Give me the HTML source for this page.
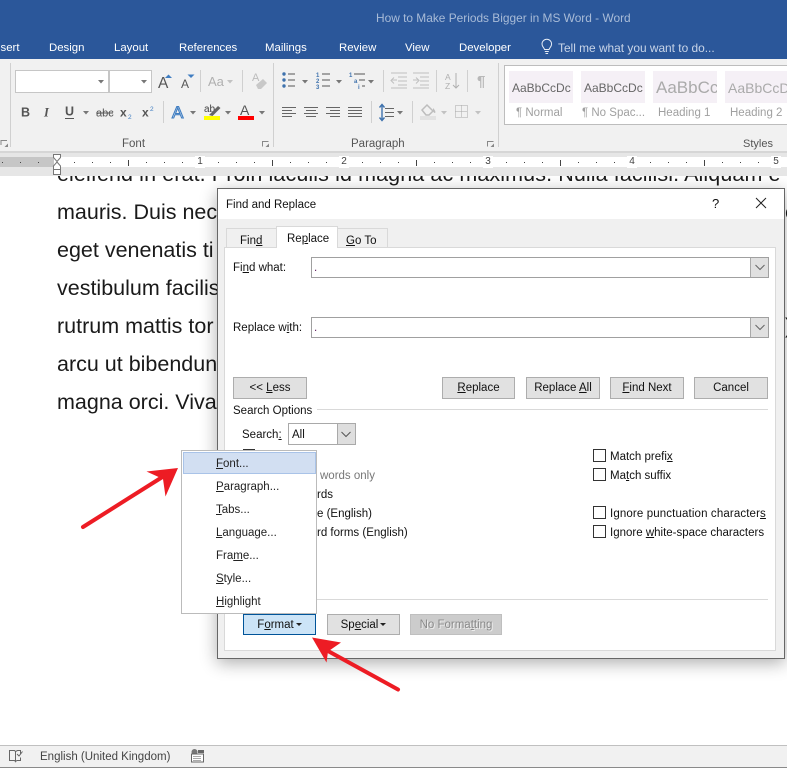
<!DOCTYPE html>
<html><head><meta charset="utf-8"><style>
html,body{margin:0;padding:0;width:787px;height:768px;overflow:hidden;background:#fff}
body{position:relative;font-family:"Liberation Sans",sans-serif;font-size:11.5px;color:#111}
.a,.t{position:absolute}
.t{white-space:nowrap;line-height:14px}
.tab{color:#fff;font-size:11.4px;top:41px}
.doc{position:absolute;left:57px;font-size:21.5px;line-height:24px;white-space:nowrap;color:#1a1a1a}
.btn{position:absolute;background:#e1e1e1;border:1px solid #adadad;box-sizing:border-box;height:22px;text-align:center;line-height:21px;color:#111}
.input{position:absolute;left:311px;width:458px;height:21px;box-sizing:border-box;border:1px solid #a0a0a0;background:#fff}
.dd{position:absolute;right:0;top:0;width:17px;height:19px;background:#e0e0e0;border-left:1px solid #a9a9a9}
.cb{position:absolute;left:593px;width:13px;height:13px;box-sizing:border-box;border:1px solid #333;background:#fff}
.mi{position:absolute;left:216px;line-height:14px;color:#222}
.st{position:absolute;top:71px;width:64px;height:32px;background:#f5f0f6;overflow:hidden;white-space:nowrap;color:#666;line-height:34px}
.sl{position:absolute;top:106px;color:#a0a0a0;line-height:14px;white-space:nowrap;font-size:11.5px}
.lb{color:#555;font-size:11.5px;top:137px}
.car{display:inline-block;width:0;height:0;border:3px solid transparent;border-top:3px solid #222;border-bottom:0;vertical-align:2px;margin-left:2px}
</style></head><body>

<div class="doc" style="top:162px;letter-spacing:.1px">eleifend in erat. Proin iaculis id magna ac maximus. Nulla facilisi. Aliquam e</div>
<div class="doc" style="top:200px">mauris. Duis nec</div>
<div class="doc" style="top:238px">eget venenatis ti</div>
<div class="doc" style="top:276px">vestibulum facilis</div>
<div class="doc" style="top:314px">rutrum mattis tor</div>
<div class="doc" style="top:352px">arcu ut bibendun</div>
<div class="doc" style="top:390px">magna orci. Viva</div>
<div class="doc" style="top:200px;left:785px">e</div>
<div class="doc" style="top:314px;left:785px">)</div>

<!-- title + tabs -->
<div class="a" style="left:0;top:0;width:787px;height:59px;background:#2b579a"></div>
<div class="t" style="left:376px;top:11px;color:#a8bbd7;font-size:11.9px">How to Make Periods Bigger in MS Word - Word</div>
<div class="t tab" style="left:-9px">Insert</div>
<div class="t tab" style="left:49px">Design</div>
<div class="t tab" style="left:114px">Layout</div>
<div class="t tab" style="left:179px">References</div>
<div class="t tab" style="left:265px">Mailings</div>
<div class="t tab" style="left:339px">Review</div>
<div class="t tab" style="left:405px">View</div>
<div class="t tab" style="left:459px">Developer</div>
<div class="t tab" style="left:558px;color:#c9d5e8;font-size:11.9px">Tell me what you want to do...</div>
<svg class="a" style="left:540px;top:38px" width="14" height="18" fill="none" stroke="#e6ecf5"><path d="M4.5 11.5C4 9.500 2 8.800 2 6a4.800 4.800 0 0 1 9.600 0c0 2.800-2 3.500-2.500 5.500zM4.800 13.500h4M5.500 15.500h2.600"/></svg>

<!-- ribbon -->
<div class="a" style="left:0;top:59px;width:787px;height:92px;background:#f1f1f1;border-bottom:2px solid #d6d6d6"></div>
<div class="a" style="left:15px;top:70px;width:94px;height:23px;box-sizing:border-box;background:#fff;border:1px solid #c6c6c6"></div>
<div class="a" style="left:109px;top:70px;width:43px;height:23px;box-sizing:border-box;background:#fff;border:1px solid #c6c6c6"></div>

<svg class="a" style="left:0;top:59px" width="787" height="92" viewBox="0 59 787 92" font-family="Liberation Sans">
<g fill="#d0d0d0"><rect x="10" y="63" width="1" height="84"/><rect x="273" y="63" width="1" height="84"/><rect x="498" y="63" width="1" height="84"/>
<rect x="200" y="70" width="1" height="22"/><rect x="242" y="70" width="1" height="22"/><rect x="163" y="101" width="1" height="22"/><rect x="383" y="70" width="1" height="22"/><rect x="436" y="70" width="1" height="22"/><rect x="467" y="70" width="1" height="22"/><rect x="371" y="101" width="1" height="22"/><rect x="412" y="101" width="1" height="22"/></g>
<!-- drop arrows -->
<g fill="#777"><path d="M98 80h6l-3 3.500zM141 80h6l-3 3.500zM83 111h6l-3 3.500zM190 111h6l-3 3.500zM225 111h6l-3 3.500zM259 111h6l-3 3.500zM302 80h6l-3 3.500zM336 80h6l-3 3.500zM368 80h6l-3 3.500zM397 111h6l-3 3.500z"/></g>
<g fill="#c2c2c2"><path d="M227 80h6l-3 3.500zM441 111h6l-3 3.500zM475 111h6l-3 3.500z"/></g>
<!-- font size -->
<text x="158" y="88" font-size="15.500" fill="#555">A</text><path d="M165 78l3.500-3.500 3.500 3.500z" fill="#3f7dc1"/>
<text x="181" y="88" font-size="12" fill="#555">A</text><path d="M187.500 74.500h7l-3.500 3.500z" fill="#3f7dc1"/>
<text x="208" y="86" font-size="13" fill="#b0b0b0">Aa</text>
<text x="252" y="81" font-size="11" fill="#bbb">A</text><path d="M256 85l7-6 4 4-6 6h-3z" fill="#c8c8c8"/>
<!-- format row -->
<text x="21" y="116.500" font-size="12.500" font-weight="bold" fill="#555">B</text>
<text x="44" y="116.500" font-size="12.500" font-style="italic" font-family="Liberation Serif" font-weight="bold" fill="#555">I</text>
<text x="65" y="115.500" font-size="12.500" font-weight="bold" fill="#555">U</text><rect x="65" y="118" width="9" height="1" fill="#555"/>
<text x="96" y="116.500" font-size="11" fill="#555">abc</text><rect x="96" y="112.500" width="17" height="1" fill="#555"/>
<text x="120" y="116.500" font-size="12" font-weight="bold" fill="#555">x</text><text x="128" y="119" font-size="6.500" fill="#3f7dc1">2</text>
<text x="142" y="116.500" font-size="12" font-weight="bold" fill="#555">x</text><text x="150" y="111" font-size="6.500" fill="#3f7dc1">2</text>
<text x="172" y="118" font-size="17" fill="#fff" stroke="#3f7dc1" stroke-width="1.100">A</text>
<text x="204" y="112" font-size="10" fill="#444">ab</text><path d="M209 115l9-9 2.500 2-8 8z" fill="#666"/><rect x="204" y="116" width="16" height="4" fill="#ff0"/>
<text x="240" y="115" font-size="14" fill="#555">A</text><rect x="238" y="116" width="16" height="4" fill="#f00"/>
<!-- launchers -->
<g fill="none" stroke="#888"><path d="M1 145v-4.500h6M262.500 146.500v-5h6M487.500 146.500v-5h6"/></g><g fill="#888"><path d="M8 147l-3.500 0 3.500-3.500zM269 147h-3.500l3.500-3.500zM494 147h-3.500l3.500-3.500z"/></g>
<!-- lists -->
<g fill="#3f72ad"><circle cx="284" cy="74" r="1.700"/><circle cx="284" cy="80" r="1.700"/><circle cx="284" cy="86" r="1.700"/></g>
<path d="M288 74h7M288 80h7M288 86h7" stroke="#555"/>
<g font-size="6" font-weight="bold" fill="#3f72ad"><text x="316" y="77">1</text><text x="316" y="83">2</text><text x="316" y="89">3</text><text x="349" y="77">1</text><text x="354" y="83">a</text><text x="358" y="89">i</text></g>
<path d="M322 74h8M322 80h8M322 86h8M354 74h11M359 80h6M362 86h3" stroke="#555"/>
<!-- indent -->
<g stroke="#c0c0c0" fill="none"><path d="M391 73h16M398 77h9M398 81h9M398 85h9M391 88h16M413 73h16M420 77h9M420 81h9M420 85h9M413 88h16"/><path d="M397 80h-6M394 77.500l-3 3 3 3" /><path d="M413 80h6M416 77.500l3 3-3 3"/></g>
<text x="445" y="80" font-size="8.500" fill="#b0b0b0">A</text><text x="445" y="89" font-size="8.500" fill="#b0b0b0">Z</text><path d="M456 73v15M453 85l3 3 3-3" fill="none" stroke="#b0b0b0"/>
<text x="477" y="86" font-size="15" font-weight="bold" fill="#b8b8b8">¶</text>
<!-- align -->
<g stroke="#666"><path d="M282 107.500h14M282 110.500h10M282 113.500h14M282 116.500h10M304 107.500h14M306 110.500h10M304 113.500h14M306 116.500h10M326 107.500h14M330 110.500h10M326 113.500h14M330 116.500h10M348 107.500h14M348 110.500h14M348 113.500h14M348 116.500h14M385 108.500h9M385 112.500h9M385 116.500h9"/></g>
<path d="M382 105v15M379.500 107.500l2.500-3 2.500 3M379.500 117.500l2.500 3 2.500-3" fill="none" stroke="#3f72ad" stroke-width="1.400"/>
<!-- shade -->
<path d="M422 110l5-5 6 6-4 4h-3z" fill="none" stroke="#bdbdbd" stroke-width="1.500"/><path d="M433 108c2 2 3 4 2 5-2 0-2-3-2-5z" fill="#bdbdbd"/><rect x="420" y="116" width="16" height="4" fill="#e2e2e2"/>
<path d="M455.500 105.500h12v12h-12zM461.500 105.500v12M455.500 111.500h12" fill="none" stroke="#a8a8a8" stroke-dasharray="1 1"/>
</svg>
<div class="t lb" style="left:122px">Font</div>
<div class="t lb" style="left:351px">Paragraph</div>
<div class="t lb" style="left:743px;font-size:11px">Styles</div>

<!-- styles gallery -->
<div class="a" style="left:504px;top:65px;width:290px;height:60px;box-sizing:border-box;border:1px solid #bdbdbd;background:#fff"></div>
<div class="st" style="left:509px;font-size:12px;padding-left:3px;width:61px">AaBbCcDc</div>
<div class="st" style="left:581px;font-size:12px;padding-left:3px;width:61px">AaBbCcDc</div>
<div class="st" style="left:653px;font-size:17px;padding-left:3px;width:61px;color:#aaa">AaBbCc</div>
<div class="st" style="left:725px;font-size:14px;padding-left:3px;width:62px;color:#aaa">AaBbCcD</div>
<div class="sl" style="left:516px">¶ Normal</div>
<div class="sl" style="left:582px">¶ No Spac...</div>
<div class="sl" style="left:658px">Heading 1</div>
<div class="sl" style="left:730px">Heading 2</div>

<!-- ruler -->
<div class="a" style="left:0;top:153px;width:787px;height:23px;background:#e6e6e6"></div>
<div class="a" style="left:0;top:157px;width:787px;height:10px;background:#fff"></div>
<div class="a" style="left:0;top:157px;width:54px;height:10px;background:#c6c6c6"></div>
<div class="a" style="left:2px;top:162px;width:40px;height:1px;background:repeating-linear-gradient(90deg,#444 0 1px,transparent 1px 18px)"></div>
<div class="a" style="left:74px;top:162px;width:713px;height:1px;background:repeating-linear-gradient(90deg,#444 0 1px,transparent 1px 18px)"></div>
<div class="a" style="left:128px;top:160px;width:659px;height:6px;background:repeating-linear-gradient(90deg,#444 0 1px,transparent 1px 144px)"></div>
<div class="t" style="left:195px;top:156px;background:#fff;width:10px;text-align:center;color:#444;font-size:10px;line-height:12px">1</div>
<div class="t" style="left:339px;top:156px;background:#fff;width:10px;text-align:center;color:#444;font-size:10px;line-height:12px">2</div>
<div class="t" style="left:483px;top:156px;background:#fff;width:10px;text-align:center;color:#444;font-size:10px;line-height:12px">3</div>
<div class="t" style="left:627px;top:156px;background:#fff;width:10px;text-align:center;color:#444;font-size:10px;line-height:12px">4</div>
<div class="t" style="left:771px;top:156px;background:#fff;width:10px;text-align:center;color:#444;font-size:10px;line-height:12px">5</div>
<svg class="a" style="left:52px;top:153px" width="10" height="23" fill="#fff" stroke="#777"><path d="M1.500 1.500h7v3l-3.500 4-3.500-4zM5 9l3.500 4v3.500h-7V13zM1.500 16.500h7v5h-7z"/></svg>

<!-- dialog -->
<div class="a" style="left:217px;top:188px;width:568px;height:471px;box-sizing:border-box;border:1px solid #666;background:#f0f0f0;box-shadow:0 4px 16px rgba(0,0,0,.32)"></div>
<div class="a" style="left:218px;top:189px;width:566px;height:30px;background:#fff"></div>
<div class="t" style="left:226px;top:198px">Find and Replace</div>
<div class="t" style="left:712px;top:197px;font-size:13px">?</div>
<svg class="a" style="left:755px;top:197px" width="13" height="13" stroke="#222" fill="none"><path d="M1 1l10 10M11 1L1 11"/></svg>

<div class="a" style="left:224px;top:247px;width:552px;height:404px;box-sizing:border-box;border:1px solid #d9d9d9;background:#fff"></div>
<div class="a" style="left:226px;top:228px;width:51px;height:19px;box-sizing:border-box;border:1px solid #d9d9d9;border-bottom:0;background:#f0f0f0"></div>
<div class="a" style="left:337px;top:228px;width:51px;height:19px;box-sizing:border-box;border:1px solid #d9d9d9;border-bottom:0;background:#f0f0f0"></div>
<div class="a" style="left:276px;top:226px;width:62px;height:22px;box-sizing:border-box;border:1px solid #d9d9d9;border-bottom:0;background:#fff"></div>
<div class="t" style="left:240px;top:234px">Fin<u>d</u></div>
<div class="t" style="left:287px;top:232px">Re<u>p</u>lace</div>
<div class="t" style="left:346px;top:234px"><u>G</u>o To</div>

<div class="t" style="left:233px;top:261px">Fi<u>n</u>d what:</div>
<div class="input" style="top:257px"><div class="dd"></div><span class="t" style="left:2px;top:3px;color:#602060">.</span></div>
<svg class="a" style="left:754px;top:264px" width="12" height="7" fill="none" stroke="#666"><path d="M1.500 1l4.500 4.500L10.500 1"/></svg>
<div class="t" style="left:233px;top:321px">Replace w<u>i</u>th:</div>
<div class="input" style="top:317px"><div class="dd"></div><span class="t" style="left:2px;top:3px;color:#602060">.</span></div>
<svg class="a" style="left:754px;top:324px" width="12" height="7" fill="none" stroke="#666"><path d="M1.500 1l4.500 4.500L10.500 1"/></svg>

<div class="btn" style="left:233px;top:377px;width:74px">&lt;&lt; <u>L</u>ess</div>
<div class="btn" style="left:442px;top:377px;width:73px"><u>R</u>eplace</div>
<div class="btn" style="left:526px;top:377px;width:74px">Replace <u>A</u>ll</div>
<div class="btn" style="left:610px;top:377px;width:74px"><u>F</u>ind Next</div>
<div class="btn" style="left:694px;top:377px;width:74px">Cancel</div>

<div class="t" style="left:233px;top:404px">Search Options</div>
<div class="a" style="left:317px;top:409px;width:451px;height:1px;background:#d9d9d9"></div>
<div class="t" style="left:242px;top:428px">Search<u>:</u></div>
<div class="a" style="left:288px;top:423px;width:68px;height:22px;box-sizing:border-box;border:1px solid #a9a9a9;background:#fff"><div class="a" style="right:0;top:0;width:17px;height:20px;background:#dedede;border-left:1px solid #a9a9a9"></div><span class="t" style="left:3px;top:4px">All</span></div>
<svg class="a" style="left:340px;top:431px" width="12" height="7" fill="none" stroke="#555"><path d="M1.500 1l4.500 4.500L10.500 1"/></svg>
<div class="a" style="left:243px;top:449px;width:12px;height:1px;background:#333"></div>

<div class="t" style="left:320px;top:469px;color:#777">words only</div>
<div class="t" style="left:317px;top:488px">rds</div>
<div class="t" style="left:317px;top:507px">e (English)</div>
<div class="t" style="left:317px;top:526px">rd forms (English)</div>

<div class="cb" style="top:449px"></div><div class="t" style="left:610px;top:450px">Match prefi<u>x</u></div>
<div class="cb" style="top:468px"></div><div class="t" style="left:610px;top:469px">Ma<u>t</u>ch suffix</div>
<div class="cb" style="top:506px"></div><div class="t" style="left:610px;top:507px;letter-spacing:.13px">Ignore punctuation character<u>s</u></div>
<div class="cb" style="top:525px"></div><div class="t" style="left:610px;top:526px">Ignore <u>w</u>hite-space characters</div>

<div class="a" style="left:233px;top:599px;width:535px;height:1px;background:#d9d9d9"></div>
<div class="btn" style="left:243px;top:614px;width:73px;height:21px;background:#cce4f7;border-color:#005499;line-height:20px">F<u>o</u>rmat<span class="car"></span></div>
<div class="btn" style="left:327px;top:614px;width:73px;height:21px;line-height:20px">Sp<u>e</u>cial<span class="car"></span></div>
<div class="btn" style="left:410px;top:614px;width:92px;height:21px;background:#ccc;border-color:#bfbfbf;line-height:20px;color:#8a8a8a;text-shadow:1px 1px 0 #eee">No Forma<u>t</u>ting</div>

<!-- menu -->
<div class="a" style="left:181px;top:450px;width:136px;height:164px;box-sizing:border-box;border:1px solid #bbb;background:#fff"></div>
<div class="a" style="left:183px;top:452px;width:133px;height:22px;box-sizing:border-box;border:1px solid #a9c3e8;background:#d2dff2"></div>
<div class="mi" style="top:457px"><u>F</u>ont...</div>
<div class="mi" style="top:480px"><u>P</u>aragraph...</div>
<div class="mi" style="top:503px"><u>T</u>abs...</div>
<div class="mi" style="top:526px"><u>L</u>anguage...</div>
<div class="mi" style="top:549px">Fra<u>m</u>e...</div>
<div class="mi" style="top:572px"><u>S</u>tyle...</div>
<div class="mi" style="top:595px"><u>H</u>ighlight</div>

<!-- status -->
<div class="a" style="left:0;top:745px;width:787px;height:23px;box-sizing:border-box;background:#f1f1f1;border-top:1px solid #c0c0c0;border-bottom:1px solid #8a8a8a"></div>
<svg class="a" style="left:8px;top:748px" width="16" height="16" fill="none" stroke="#666"><path d="M1.500 2.500h5l1 1v10l-1-1h-5zM7.500 3.500l2-1h3v4M7.500 13.500l1.500-1h3.500v-3M9 6l2 2 3.500-4.500"/></svg>
<div class="t" style="left:40px;top:750px;color:#444;font-size:11.500px">English (United Kingdom)</div>
<svg class="a" style="left:191px;top:749px" width="14" height="14"><circle cx="3.500" cy="3" r="3" fill="#777"/><rect x="0.500" y="5" width="12" height="8" fill="#fff" stroke="#666"/><rect x="7" y="1" width="6" height="3" fill="#666"/><path d="M2.500 7.500h8M2.500 9.500h8M2.500 11.500h8" stroke="#555" stroke-dasharray="1 1"/></svg>

<!-- arrows -->
<svg class="a" style="left:0;top:0;pointer-events:none" width="787" height="768">
<path d="M83 527L164 476" stroke="#ed1c24" stroke-width="4" stroke-linecap="round"/>
<path d="M178 468L146.500 471.500 163 479 165.500 496.500z" fill="#ed1c24"/>
<path d="M398 689.500L328 651" stroke="#ed1c24" stroke-width="4" stroke-linecap="round"/>
<path d="M312 637.500L341 642.500 328 651.500 326.500 662.500z" fill="#ed1c24"/>
</svg>
</body></html>
